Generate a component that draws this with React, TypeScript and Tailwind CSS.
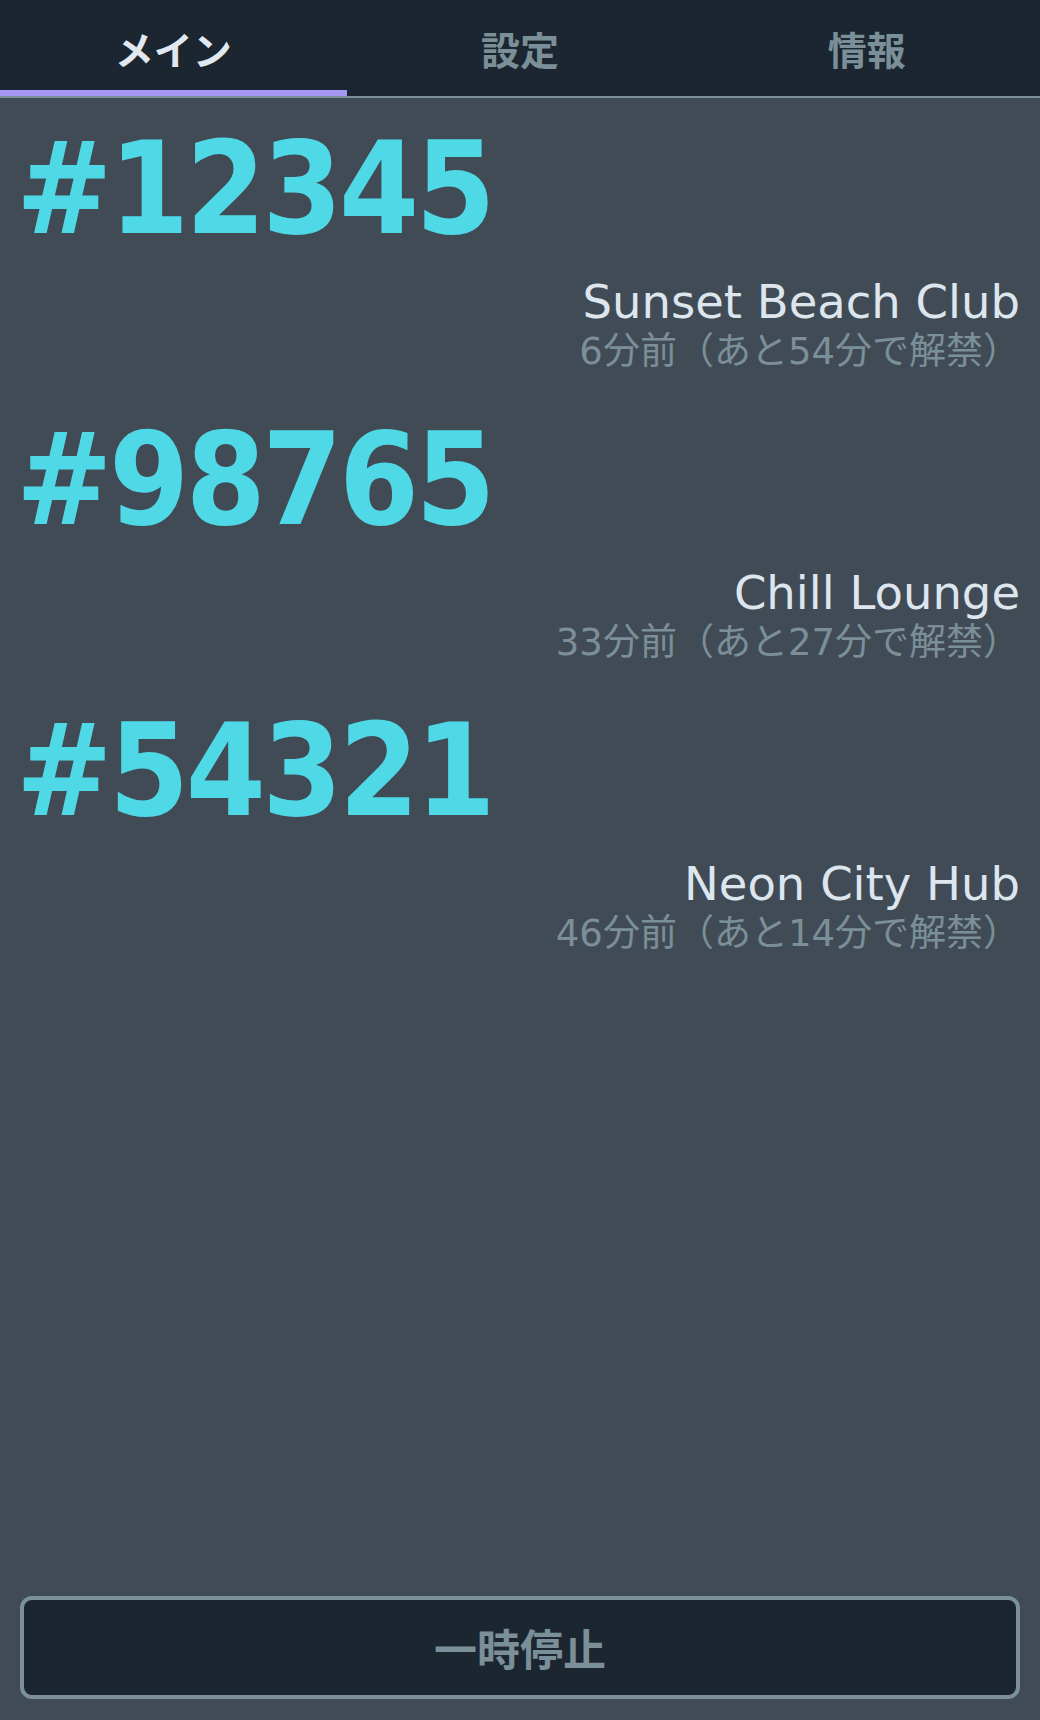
import { useState } from "react";

const TABS = ["メイン", "設定", "情報"] as const;

interface Entry {
  id: string;
  name: string;
  ago: number;
  remain: number;
}

const ENTRIES: Entry[] = [
  { id: "12345", name: "Sunset Beach Club", ago: 6, remain: 54 },
  { id: "98765", name: "Chill Lounge", ago: 33, remain: 27 },
  { id: "54321", name: "Neon City Hub", ago: 46, remain: 14 },
];

const FONT = "font-['DejaVu_Sans','Noto_Sans_CJK_JP',sans-serif]";

export default function App() {
  const [active, setActive] = useState(0);
  const [paused, setPaused] = useState(false);

  return (
    <div className={`flex min-h-[1720px] w-[1040px] flex-col bg-[#414b55] ${FONT}`}>
      <nav className="grid h-[98px] grid-cols-3 border-b-2 border-[#7b9098] bg-[#1b2630]">
        {TABS.map((tab, i) => (
          <button
            key={tab}
            onClick={() => setActive(i)}
            className={`flex h-[96px] items-center justify-center pt-[6px] font-['Noto_Sans_CJK_JP',sans-serif] text-[39px] leading-none font-bold ${
              i === active
                ? "border-b-[6px] border-[#a797f4] text-[#e1e8ef]"
                : "pb-[6px] text-[#7b8f98]"
            }`}
          >
            {tab}
          </button>
        ))}
      </nav>

      <main className="flex flex-1 flex-col gap-[42px] pt-[27px] pr-5 pl-[16px]">
        {ENTRIES.map((e) => (
          <div key={e.id} className="flex flex-col">
            <p className="font-['DejaVu_Sans_Condensed','DejaVu_Sans',sans-serif] text-[128px] leading-[128px] font-bold font-stretch-condensed tracking-[-3.5px] text-[#4fd9e7]">
              #{e.id}
            </p>
            <p className="mt-[21px] text-right text-[46.5px] leading-[56px] text-[#dde6ee]">{e.name}</p>
            <p className="text-right text-[37px] leading-[44px] text-[#7b8f98]">
              {e.ago}分前（あと{e.remain}分で解禁）
            </p>
          </div>
        ))}
      </main>

      <div className="px-5 pb-[21px]">
        <button
          onClick={() => setPaused((p) => !p)}
          className="flex h-[103px] w-full items-center justify-center rounded-[12px] border-4 border-[#7b9098] bg-[#1b2630] font-['Noto_Sans_CJK_JP',sans-serif] text-[43px] leading-none font-bold text-[#7b8f98]"
        >
          {paused ? "再開" : "一時停止"}
        </button>
      </div>
    </div>
  );
}
